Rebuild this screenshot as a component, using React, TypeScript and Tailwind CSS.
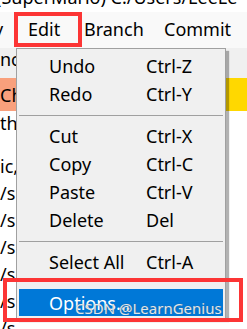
type Item = { label: string; keys: string } | "sep";

const items: Item[] = [
  { label: "Undo", keys: "Ctrl-Z" },
  { label: "Redo", keys: "Ctrl-Y" },
  "sep",
  { label: "Cut", keys: "Ctrl-X" },
  { label: "Copy", keys: "Ctrl-C" },
  { label: "Paste", keys: "Ctrl-V" },
  { label: "Delete", keys: "Del" },
  "sep",
  { label: "Select All", keys: "Ctrl-A" },
];

const sideRows = ["ic,", "/s", "/s", "/s", "/s", "/s", "/s"];

function EditMenu() {
  return (
    <div className="absolute left-[16px] top-[48px] w-[210px] h-[271px] bg-[#f0f0f0] border border-[#a0a0a0] shadow-[3px_3px_1px_rgba(0,0,0,0.3)] pt-[3px]">
      {items.map((it, i) =>
        it === "sep" ? (
          <div key={i} className="h-[14px] flex items-center px-[2px]">
            <div className="w-full h-[1px] bg-[#a0a0a0]" />
          </div>
        ) : (
          <div key={i} className="h-[28px] flex items-center pl-[32px]">
            <span className="w-[97px]">{it.label}</span>
            <span>{it.keys}</span>
          </div>
        )
      )}
      <div className="mt-[13px] mx-[2px] h-[27px] bg-[#0078d7] text-white flex items-center pl-[30px]">
        Options...
      </div>
    </div>
  );
}

export default function App() {
  return (
    <div
      className="relative w-[247px] h-[329px] overflow-hidden bg-white text-black text-[18px] leading-none"
      style={{ fontFamily: '"Noto Sans", "Open Sans", sans-serif' }}
    >
      {/* title line, cut off at top */}
      <div className="h-[12px] relative overflow-hidden">
        <span className="absolute left-[-4px] top-[-12px] whitespace-nowrap">
          (SuperMario) C:/Users/LeeLe
        </span>
      </div>

      {/* menu bar */}
      <div className="h-[36px] bg-[#f9f9f9] flex items-center whitespace-nowrap pb-[2px]">
        <span className="ml-[-6px] w-[34px]">v</span>
        <span className="w-[56px]">Edit</span>
        <span className="w-[80px]">Branch</span>
        <span>Commit</span>
      </div>

      {/* panel behind the menu */}
      <div className="h-[30px] bg-[#f0f0f0] flex items-center">
        <span className="pb-[8px]">nc</span>
      </div>
      <div className="h-[33px] flex">
        <div className="w-[16px] bg-[#f9a07c] flex items-center overflow-hidden">
          <span>Ch</span>
        </div>
        <div className="flex-1 bg-[#ffd800]" />
      </div>
      <div className="h-[24px] w-[16px] flex items-center overflow-hidden whitespace-nowrap">th</div>
      <div className="h-[17px]" />
      <div className="flex flex-col">
        {sideRows.map((t, i) => (
          <div key={i} className="h-[27px] flex items-center overflow-hidden w-[16px] whitespace-nowrap">
            {t}
          </div>
        ))}
      </div>

      <EditMenu />

      {/* highlight boxes */}
      <div className="absolute left-[14px] top-[12px] w-[68px] h-[35px] border-[4px] border-[#fc3535]" />
      <div className="absolute left-[3px] top-[278px] w-[240px] h-[44px] border-[4px] border-[#fc3535]" />

      {/* watermark */}
      <div
        className="absolute left-[75px] top-[301px] text-[15px] text-white/85 whitespace-nowrap"
        style={{ textShadow: "0 0 1px rgba(80,80,80,0.8)" }}
      >
        CSDN @LearnGenius
      </div>
    </div>
  );
}
